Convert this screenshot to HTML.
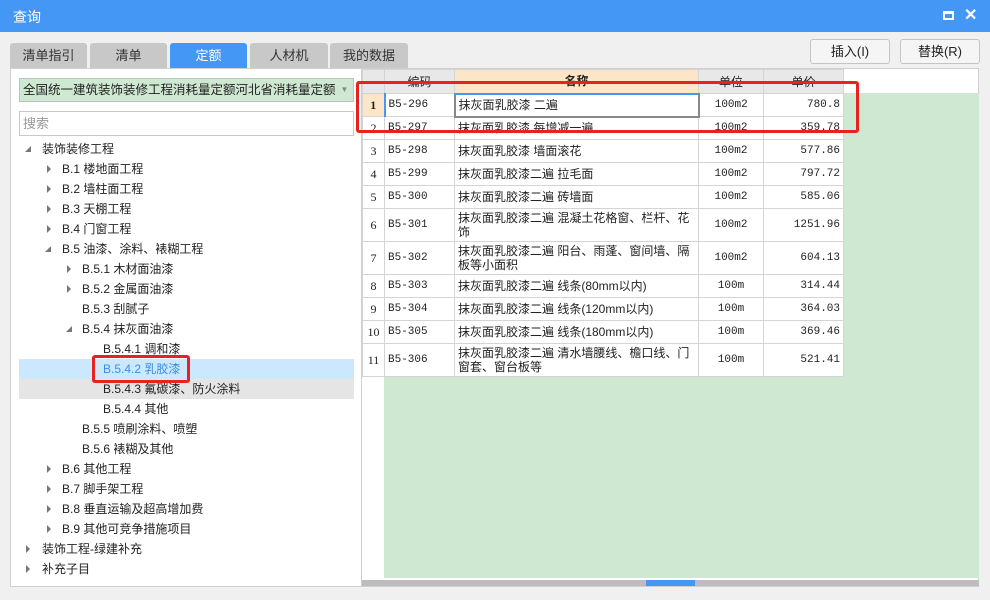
<!DOCTYPE html><html><head><meta charset="utf-8"><style>
*{box-sizing:border-box;margin:0;padding:0}
body{width:990px;height:600px;overflow:hidden;background:#f0f0f0;font-family:"Liberation Sans","Noto Sans CJK SC",sans-serif;font-size:12px;color:#222;position:relative}
.abs{position:absolute}
.title{left:0;top:0;width:990px;height:32px;background:#4597f5;color:#fff;font-size:14px;line-height:34px;padding-left:13px}
.tab{top:43px;height:25px;background:#c8c8c8;text-align:center;line-height:26px;font-size:13px;border-radius:3px 3px 0 0;color:#333}
.btn{top:39px;height:25px;border:1px solid #c4c4c4;background:#f5f5f5;border-radius:3px;text-align:center;line-height:23px;font-size:13px}
.tree div{position:absolute;height:20px;line-height:20px;font-size:12px;white-space:nowrap}
.tri{position:absolute;width:0;height:0;border-left:4px solid #777;border-top:4px solid transparent;border-bottom:4px solid transparent}
.dn{position:absolute;width:0;height:0;border-right:6px solid #777;border-top:6px solid transparent}
table{border-collapse:collapse;position:absolute;left:362px;top:69px;table-layout:fixed;background:#fff}
td{border:1px solid #d4d4d4;padding:0 3px;font-size:12px;line-height:14px;vertical-align:middle;overflow:hidden}
td.n{text-align:center;background:#fff;font-family:"Liberation Serif",serif;font-size:12px;padding:0}
td.c,td.u,td.p{font-family:"Liberation Mono",monospace;font-size:11px}
td.u{text-align:center}td.p{text-align:right}
tr.h td{background:#e8e8e8;text-align:center;height:24px;font-family:"Liberation Sans","Noto Sans CJK SC",sans-serif;font-size:12px}
</style></head><body>
<div class="abs title">查询</div>
<div class="abs" style="left:943px;top:11px;width:11px;height:9px;border:2px solid #fff;border-top-width:3px"></div>
<div class="abs" style="left:964px;top:5px;color:#fff;font-size:16px;font-weight:bold">✕</div>
<div class="abs tab" style="left:10px;width:77px">清单指引</div>
<div class="abs tab" style="left:90px;width:77px">清单</div>
<div class="abs tab" style="left:170px;width:77px;background:#4597f5;color:#fff">定额</div>
<div class="abs tab" style="left:250px;width:78px">人材机</div>
<div class="abs tab" style="left:330px;width:78px">我的数据</div>
<div class="abs btn" style="left:810px;width:80px">插入(I)</div>
<div class="abs btn" style="left:900px;width:80px">替换(R)</div>
<div class="abs" style="left:10px;top:68px;width:969px;height:519px;background:#fff;border:1px solid #d0d0d0"></div>
<div class="abs" style="left:361px;top:68px;width:1px;height:519px;background:#d0d0d0"></div>
<div class="abs" style="left:19px;top:78px;width:335px;height:24px;background:#cfe8d2;border:1px solid #b8c8b8;line-height:22px;padding-left:3px;font-size:12.5px;overflow:hidden;white-space:nowrap">全国统一建筑装饰装修工程消耗量定额河北省消耗量定额(20</div>
<div class="abs" style="left:336px;top:80px;width:17px;height:20px;background:#cfe8d2;color:#888;font-size:8px;line-height:20px;text-align:center">▼</div>
<div class="abs" style="left:19px;top:111px;width:335px;height:25px;border:1px solid #c8c8c8;color:#999;line-height:23px;padding-left:3px;font-size:13px">搜索</div>
<div class="abs" style="left:19px;top:359px;width:335px;height:20px;background:#cce8ff"></div>
<div class="abs" style="left:19px;top:379px;width:335px;height:20px;background:#e5e5e5"></div>
<div class="tree">
<span class="dn" style="left:25px;top:146px"></span><div style="left:42px;top:139px">装饰装修工程</div>
<span class="tri" style="left:47px;top:165px"></span><div style="left:62px;top:159px">B.1 楼地面工程</div>
<span class="tri" style="left:47px;top:185px"></span><div style="left:62px;top:179px">B.2 墙柱面工程</div>
<span class="tri" style="left:47px;top:205px"></span><div style="left:62px;top:199px">B.3 天棚工程</div>
<span class="tri" style="left:47px;top:225px"></span><div style="left:62px;top:219px">B.4 门窗工程</div>
<span class="dn" style="left:45px;top:246px"></span><div style="left:62px;top:239px">B.5 油漆、涂料、裱糊工程</div>
<span class="tri" style="left:67px;top:265px"></span><div style="left:82px;top:259px">B.5.1 木材面油漆</div>
<span class="tri" style="left:67px;top:285px"></span><div style="left:82px;top:279px">B.5.2 金属面油漆</div>
<div style="left:82px;top:299px">B.5.3 刮腻子</div>
<span class="dn" style="left:66px;top:326px"></span><div style="left:82px;top:319px">B.5.4 抹灰面油漆</div>
<div style="left:103px;top:339px">B.5.4.1 调和漆</div>
<div style="left:103px;top:359px;color:#3a8ee6">B.5.4.2 乳胶漆</div>
<div style="left:103px;top:379px">B.5.4.3 氟碳漆、防火涂料</div>
<div style="left:103px;top:399px">B.5.4.4 其他</div>
<div style="left:82px;top:419px">B.5.5 喷刷涂料、喷塑</div>
<div style="left:82px;top:439px">B.5.6 裱糊及其他</div>
<span class="tri" style="left:47px;top:465px"></span><div style="left:62px;top:459px">B.6 其他工程</div>
<span class="tri" style="left:47px;top:485px"></span><div style="left:62px;top:479px">B.7 脚手架工程</div>
<span class="tri" style="left:47px;top:505px"></span><div style="left:62px;top:499px">B.8 垂直运输及超高增加费</div>
<span class="tri" style="left:47px;top:525px"></span><div style="left:62px;top:519px">B.9 其他可竞争措施项目</div>
<span class="tri" style="left:26px;top:545px"></span><div style="left:42px;top:539px">装饰工程-绿建补充</div>
<span class="tri" style="left:26px;top:565px"></span><div style="left:42px;top:559px">补充子目</div>
</div>
<div class="abs" style="left:92px;top:355px;width:98px;height:28px;border:3px solid #e8231f;border-radius:3px"></div>
<div class="abs" style="left:384px;top:93px;width:595px;height:485px;background:#cfe8d2"></div>
<table>
<colgroup><col style="width:22px"><col style="width:70px"><col style="width:244px"><col style="width:65px"><col style="width:80px"></colgroup>
<tr class="h"><td></td><td>编码</td><td style="background:#fde6c8;font-weight:bold">名称</td><td>单位</td><td>单价</td></tr>
<tr style="height:23px"><td class="n" style="background:#fde6c8;font-weight:bold;border-right:2px solid #4597f5">1</td><td class="c">B5-296</td><td style="border:2px solid #888;border-top-color:#4597f5">抹灰面乳胶漆 二遍</td><td class="u">100m2</td><td class="p">780.8</td></tr>
<tr style="height:23px"><td class="n">2</td><td class="c">B5-297</td><td>抹灰面乳胶漆 每增减一遍</td><td class="u">100m2</td><td class="p">359.78</td></tr>
<tr style="height:23px"><td class="n">3</td><td class="c">B5-298</td><td>抹灰面乳胶漆 墙面滚花</td><td class="u">100m2</td><td class="p">577.86</td></tr>
<tr style="height:23px"><td class="n">4</td><td class="c">B5-299</td><td>抹灰面乳胶漆二遍 拉毛面</td><td class="u">100m2</td><td class="p">797.72</td></tr>
<tr style="height:23px"><td class="n">5</td><td class="c">B5-300</td><td>抹灰面乳胶漆二遍 砖墙面</td><td class="u">100m2</td><td class="p">585.06</td></tr>
<tr style="height:33px"><td class="n">6</td><td class="c">B5-301</td><td>抹灰面乳胶漆二遍 混凝土花格窗、栏杆、花饰</td><td class="u">100m2</td><td class="p">1251.96</td></tr>
<tr style="height:33px"><td class="n">7</td><td class="c">B5-302</td><td>抹灰面乳胶漆二遍 阳台、雨蓬、窗间墙、隔板等小面积</td><td class="u">100m2</td><td class="p">604.13</td></tr>
<tr style="height:23px"><td class="n">8</td><td class="c">B5-303</td><td>抹灰面乳胶漆二遍 线条(80mm以内)</td><td class="u">100m</td><td class="p">314.44</td></tr>
<tr style="height:23px"><td class="n">9</td><td class="c">B5-304</td><td>抹灰面乳胶漆二遍 线条(120mm以内)</td><td class="u">100m</td><td class="p">364.03</td></tr>
<tr style="height:23px"><td class="n">10</td><td class="c">B5-305</td><td>抹灰面乳胶漆二遍 线条(180mm以内)</td><td class="u">100m</td><td class="p">369.46</td></tr>
<tr style="height:33px"><td class="n">11</td><td class="c">B5-306</td><td>抹灰面乳胶漆二遍 清水墙腰线、檐口线、门窗套、窗台板等</td><td class="u">100m</td><td class="p">521.41</td></tr>
</table>
<div class="abs" style="left:356px;top:81px;width:503px;height:52px;border:3px solid #e8231f;border-radius:3px"></div>
<div class="abs" style="left:362px;top:580px;width:617px;height:6px;background:#bdbdbd"></div>
<div class="abs" style="left:646px;top:580px;width:49px;height:6px;background:#4597f5"></div>
</body></html>
